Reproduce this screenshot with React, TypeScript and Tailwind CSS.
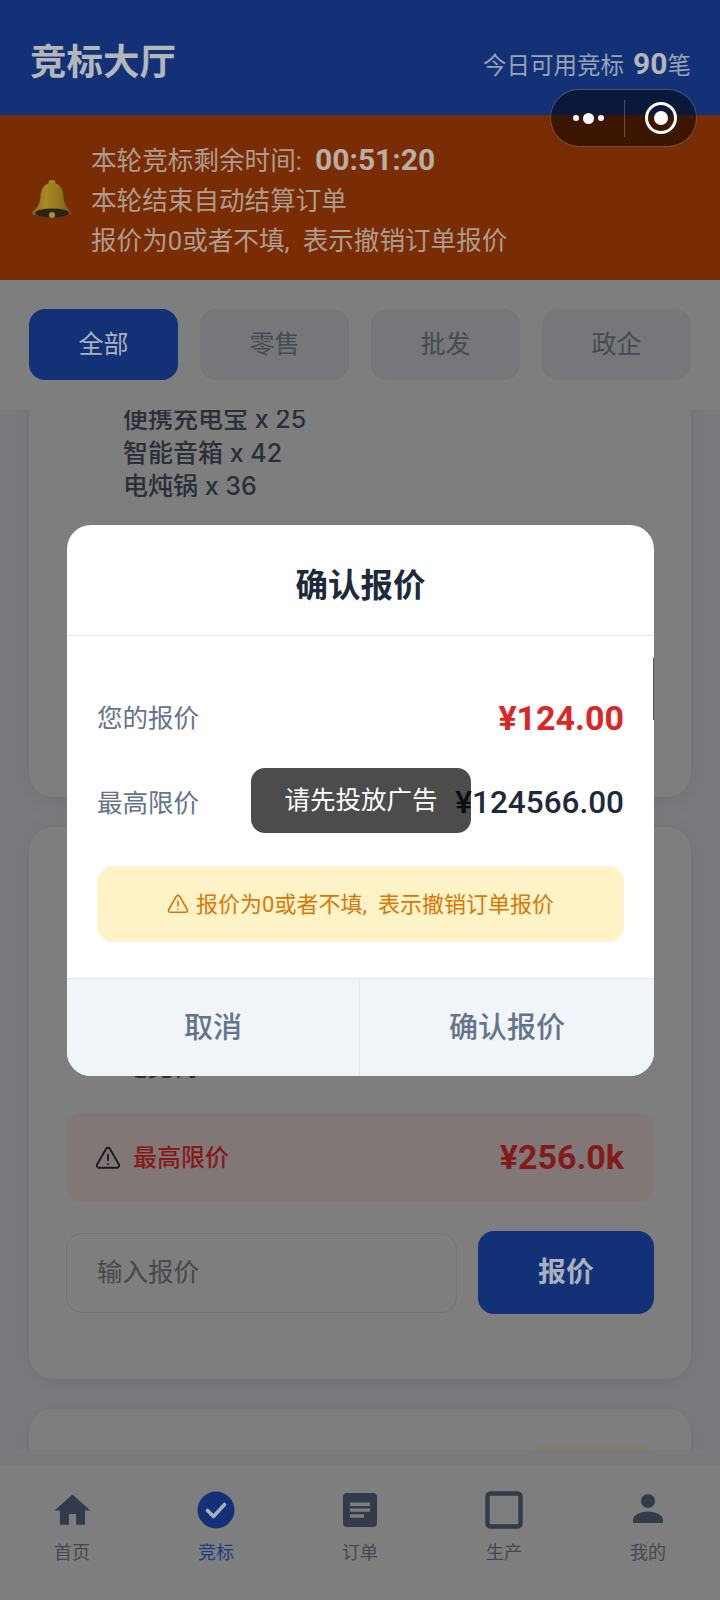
const dimInk = '#323b4c'

function HomeIcon() {
  return (
    <svg width="43" height="43" viewBox="0 0 24 24" fill={dimInk}>
      <path d="M10 20v-6h4v6h5v-8h3L12 3 2 12h3v8z" />
    </svg>
  )
}

function BidIcon() {
  return (
    <svg width="38" height="38" viewBox="0 0 38 38">
      <circle cx="19" cy="19" r="18.5" fill="#123176" />
      <path d="M10.5 19.5l6 6 11-12" fill="none" stroke="#a8aebb" strokeWidth="3.6" strokeLinecap="round" strokeLinejoin="round" />
    </svg>
  )
}

function OrderIcon() {
  return (
    <svg width="34" height="34" viewBox="0 0 34 34">
      <rect width="34" height="34" rx="4" fill={dimInk} />
      <path d="M7 9.5h20v3.4H7zM7 15.4h20v3.4H7zM7 21.3h14v3.4H7z" fill="#7e7e7e" />
    </svg>
  )
}

function ProductionIcon() {
  return (
    <svg width="38" height="38" viewBox="0 0 38 38">
      <rect x="2.5" y="2.5" width="33" height="33" rx="3" fill="none" stroke={dimInk} strokeWidth="4.4" />
    </svg>
  )
}

function UserIcon() {
  return (
    <svg width="38" height="38" viewBox="0 0 38 38" fill={dimInk}>
      <circle cx="19" cy="10" r="7" />
      <path d="M4 32v-2.5C4 24 11 20.500 19 20.500S34 24 34 29.500V32z" />
    </svg>
  )
}

function Bell() {
  return (
    <svg width="42" height="42" viewBox="0 0 42 42">
      <defs>
        <linearGradient id="bellBody" x1="0" x2="1" y1="0" y2="0">
          <stop offset="0" stopColor="#8a6c10" />
          <stop offset="0.35" stopColor="#a98a28" />
          <stop offset="0.7" stopColor="#94761a" />
          <stop offset="1" stopColor="#6f5510" />
        </linearGradient>
      </defs>
      <rect x="17.500" y="1" width="7" height="5" rx="2.500" fill="#a08428" />
      <path d="M21 4c-8 0-11 6-11.500 14-.4 6-3 11-8.500 16 4 5 35 5 40 0-5.500-5-8-10-8.500-16C32 10 29 4 21 4z" fill="url(#bellBody)" />
      <ellipse cx="21" cy="34" rx="17" ry="4.500" fill="#2a2414" />
      <circle cx="21" cy="36" r="3" fill="#a89040" />
    </svg>
  )
}

function Capsule() {
  return (
    <div className="absolute left-[550px] top-[89px] flex h-[58px] w-[147px] items-center rounded-full border border-white/25 bg-black/50">
      <div className="flex w-[73px] items-center justify-center gap-[4px] pl-[2px]">
        <span className="size-[6px] rounded-full bg-white" />
        <span className="size-[11px] rounded-full bg-white" />
        <span className="size-[6px] rounded-full bg-white" />
      </div>
      <div className="h-[37px] w-px bg-white/25" />
      <div className="flex flex-1 items-center justify-center">
        <div className="flex size-[32px] items-center justify-center rounded-full border-[3px] border-white">
          <span className="size-[14px] rounded-full bg-white" />
        </div>
      </div>
    </div>
  )
}

const tabs = ['全部', '零售', '批发', '政企']

const navItems = [
  { label: '首页', icon: <HomeIcon /> },
  { label: '竞标', icon: <BidIcon />, active: true },
  { label: '订单', icon: <OrderIcon /> },
  { label: '生产', icon: <ProductionIcon /> },
  { label: '我的', icon: <UserIcon /> },
]

export default function App() {
  return (
    <div className="relative flex h-[1600px] w-[720px] flex-col overflow-hidden bg-[#787a7d] font-[Roboto,'Noto_Sans_CJK_SC',sans-serif]">
      <header className="flex h-[115px] items-center justify-between bg-[#123176] pl-[30px] pr-[29px] pt-[12px]">
        <h1 className="text-[36.500px] font-bold text-[#b4b6ba]">竞标大厅</h1>
        <p className="flex items-baseline text-[23.500px] text-[#9aa2b4]">
          今日可用竞标
          <span className="ml-[9px] text-[30px] font-bold text-[#b4b6ba]">90</span>笔
        </p>
      </header>

      <section className="flex h-[165px] items-center gap-[18px] bg-[#7a2d04] pl-[31px] pt-[5px]">
        <Bell />
        <div className="text-[25.600px] leading-[40px] text-[#ad9c90]">
          <p className="flex items-baseline whitespace-pre">
            本轮竞标剩余时间:{'\u2002'}
            <span className="text-[30px] font-bold text-[#b9aea6]">00:51:20</span>
          </p>
          <p>本轮结束自动结算订单</p>
          <p className="whitespace-pre">报价为0或者不填,{'\u2002'}表示撤销订单报价</p>
        </div>
      </section>

      <nav className="z-10 flex h-[130px] gap-[22px] bg-[#7e7e7e] pl-[29px] pr-[29px] pt-[29px]">
        {tabs.map((tab, i) => (
          <div
            key={tab}
            className={
              i === 0
                ? 'flex h-[71px] flex-1 items-center justify-center rounded-[16px] bg-[#123176] text-[25px] text-[#a9afbd]'
                : 'flex h-[71px] flex-1 items-center justify-center rounded-[16px] bg-[#75777a] text-[25px] text-[#454a53]'
            }
          >
            {tab}
          </div>
        ))}
      </nav>

      <main className="h-[1040px] overflow-hidden">
        <div className="-mt-[20px] flex flex-col gap-[30px] px-[29px]">
          <article className="h-[407px] rounded-[24px] bg-[#7e7e7e] pl-[94px] pt-[13px] font-[Inter,'Noto_Sans_CJK_SC',sans-serif] text-[25px] font-medium leading-[33.500px] text-[#2a2f3b] shadow-[0_4px_20px_rgba(0,0,0,0.08)]">
            <p>便携充电宝 x 25</p>
            <p>智能音箱 x 42</p>
            <p>电炖锅 x 36</p>
          </article>

          <article className="flex h-[552px] flex-col justify-end rounded-[24px] bg-[#7e7e7e] px-[37px] pb-[65px] shadow-[0_4px_20px_rgba(0,0,0,0.08)]">
            <p className="mb-[29px] pl-[57px] text-[25px] font-medium leading-[33.500px] text-[#2a2f3b]">电竞椅 x 64</p>
            <div className="flex h-[89px] items-center justify-between rounded-[16px] bg-[#817777] pl-[29px] pr-[30px]">
              <div className="flex items-center gap-[12px]">
                <svg width="26" height="26" viewBox="0 0 24 24" fill="none" stroke="#1a1a1a" strokeWidth="1.700" strokeLinecap="round" strokeLinejoin="round">
                  <path d="M10.300 3.500L1.900 18a2 2 0 0 0 1.700 3h16.800a2 2 0 0 0 1.700-3L13.700 3.500a2 2 0 0 0-3.400 0z" />
                  <path d="M12 9v5M12 17.500v.1" />
                </svg>
                <span className="text-[24px] font-medium text-[#841a1a]">最高限价</span>
              </div>
              <span className="text-[34px] font-bold text-[#841a1a]">¥256.0k</span>
            </div>
            <div className="mt-[29px] flex items-center gap-[21px]">
              <div className="flex h-[80px] w-[391px] items-center rounded-[16px] border border-[#747474] pl-[30px] text-[25.500px] text-[#484848]">
                输入报价
              </div>
              <div className="flex h-[83px] flex-1 items-center justify-center rounded-[16px] bg-[#123176] text-[28px] font-bold text-[#a9afbd]">
                报价
              </div>
            </div>
          </article>

          <article className="flex h-[120px] justify-end rounded-[24px] bg-[#7e7e7e] pr-[39px] pt-[36px] shadow-[0_4px_20px_rgba(0,0,0,0.08)]">
            <div className="h-[40px] w-[120px] rounded-[10px] bg-[#817d67]" />
          </article>
        </div>
      </main>

      <footer className="mt-auto flex h-[134px] bg-[#7e7e7e] pt-[24px]">
        {navItems.map(item => (
          <div key={item.label} className="flex flex-1 flex-col items-center">
            <div className="flex h-[40px] items-center justify-center">{item.icon}</div>
            <span className={item.active ? 'mt-[9px] text-[18px] text-[#1c3a85]' : 'mt-[9px] text-[18px] text-[#434852]'}>
              {item.label}
            </span>
          </div>
        ))}
      </footer>

      <Capsule />

      {/* confirm dialog */}
      <div className="absolute left-[67px] top-[525px] flex h-[551px] w-[587px] flex-col overflow-hidden rounded-[24px] bg-white">
        <div className="absolute right-0 top-[133px] h-[62px] w-px bg-[#46557a]" />
        <div className="flex h-[111px] items-center justify-center border-b border-[#e2e8f0] pt-[12px] text-[32.500px] font-bold text-[#1e293b]">
          确认报价
        </div>
        <div className="flex flex-1 flex-col px-[30px]">
          <div className="mt-[52px] flex h-[60px] items-center justify-between">
            <span className="text-[25.500px] text-[#64748b]">您的报价</span>
            <span className="text-[34px] font-bold text-[#dc2626]">¥124.00</span>
          </div>
          <div className="mt-[25px] flex h-[60px] items-center justify-between">
            <span className="text-[25.500px] text-[#64748b]">最高限价</span>
            <span className="text-[31.500px] font-medium text-[#1e293b]">¥124566.00</span>
          </div>
          <div className="mt-[33px] flex h-[76px] items-center justify-center gap-[7px] whitespace-pre rounded-[16px] bg-[#fef3c7] text-[22px] text-[#d97706]">
            <svg width="22" height="22" viewBox="0 0 24 24" fill="none" stroke="#d97706" strokeWidth="1.800" strokeLinecap="round" strokeLinejoin="round">
              <path d="M10.300 3.500L1.900 18a2 2 0 0 0 1.700 3h16.800a2 2 0 0 0 1.700-3L13.700 3.500a2 2 0 0 0-3.400 0z" />
              <path d="M12 9v5M12 17.500v.1" />
            </svg>
            <span>报价为0或者不填,{'\u2002'}表示撤销订单报价</span>
          </div>
        </div>
        <div className="flex h-[98px] border-t border-[#e2e8f0] bg-[#f1f5f9] text-[29px] font-medium text-[#64748b]">
          <div className="flex w-[293px] items-center justify-center border-r border-[#e2e8f0] pt-[2px]">取消</div>
          <div className="flex flex-1 items-center justify-center pt-[2px]">确认报价</div>
        </div>
      </div>

      <div className="absolute left-[251px] top-[768px] flex h-[65px] w-[220px] items-center justify-center rounded-[14px] bg-black/70 text-[25.500px] text-white">
        请先投放广告
      </div>
    </div>
  )
}
